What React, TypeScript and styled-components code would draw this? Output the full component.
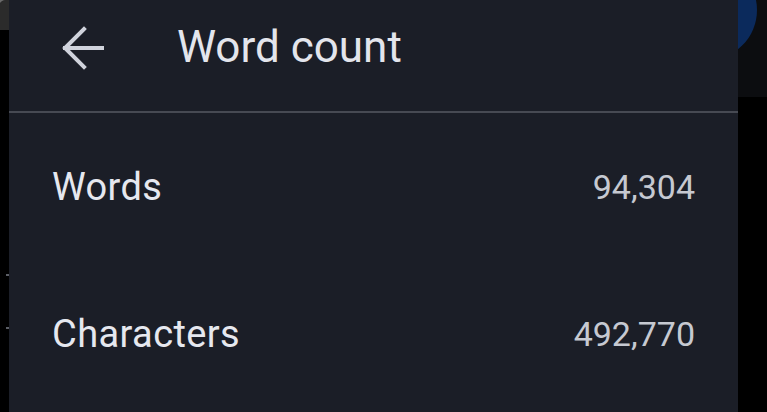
import React from "react";
import styled, { createGlobalStyle } from "styled-components";

const Global = createGlobalStyle`
  html, body { margin: 0; padding: 0; background: #000; }
  body { font-family: Roboto, "Noto Sans", Arial, sans-serif; overflow: hidden; }
`;

const Stage = styled.div`
  position: relative;
  width: 767px;
  height: 412px;
  background: #000;
  overflow: hidden;
`;

const TopBar = styled.div`
  position: absolute;
  left: 700px;
  top: 0;
  width: 67px;
  height: 97px;
  background: #0c0d10;
`;

const BehindLetter = styled.div`
  position: absolute;
  left: -30px;
  top: -18px;
  font-size: 60px;
  color: #6b6b6b;
  font-family: Roboto, sans-serif;
  background: #2b2b2b;
  padding: 0 20px;
  line-height: 48px;
`;

const Avatar = styled.div`
  position: absolute;
  left: 657px;
  top: -40px;
  width: 100px;
  height: 100px;
  border-radius: 50%;
  background: #0b2a5c;
`;

const Tick = styled.div<{ $top: number }>`
  position: absolute;
  left: 6px;
  top: ${(p) => p.$top}px;
  width: 3px;
  height: 2px;
  background: #5c5f66;
`;

const Panel = styled.div`
  position: absolute;
  left: 9px;
  top: 0;
  width: 729px;
  height: 412px;
  background: #1b1e27;
  display: flex;
  flex-direction: column;
`;

const Header = styled.div`
  height: 94px;
  display: flex;
  align-items: center;
  padding-left: 51px;
  margin-bottom: 17px;
`;

const BackButton = styled.div`
  width: 44px;
  height: 44px;
  display: flex;
  align-items: center;
  justify-content: center;
  margin-right: 73px;
  margin-top: 2px;
`;

const Title = styled.h1`
  margin: 0;
  font-weight: 400;
  font-size: 44px;
  color: #e3e5ec;
`;

const Divider = styled.div`
  height: 2px;
  background: #474a53;
`;

const Row = styled.div`
  height: 147px;
  display: flex;
  align-items: center;
  justify-content: space-between;
  padding: 0 43px 0 43px;
`;

const Label = styled.span`
  font-size: 38px;
  color: #e6e8ef;
  letter-spacing: 0.4px;
`;

const Value = styled.span`
  font-size: 34px;
  color: #c6c9d1;
`;

export default function App() {
  return (
    <>
      <Global />
      <Stage>
        <TopBar />
        <BehindLetter>r</BehindLetter>
        <Avatar />
        <Tick $top={274} />
        <Tick $top={327} />
        <Panel>
          <Header>
            <BackButton>
              <svg width="44" height="44" viewBox="0 0 44 44" fill="none">
                <path
                  d="M42 22H5M24 3L5 22L24 41"
                  stroke="#d0d3dc"
                  strokeWidth="4"
                  strokeLinecap="square"
                />
              </svg>
            </BackButton>
            <Title>Word count</Title>
          </Header>
          <Divider />
          <Row>
            <Label>Words</Label>
            <Value>94,304</Value>
          </Row>
          <Row>
            <Label>Characters</Label>
            <Value>492,770</Value>
          </Row>
        </Panel>
      </Stage>
    </>
  );
}
